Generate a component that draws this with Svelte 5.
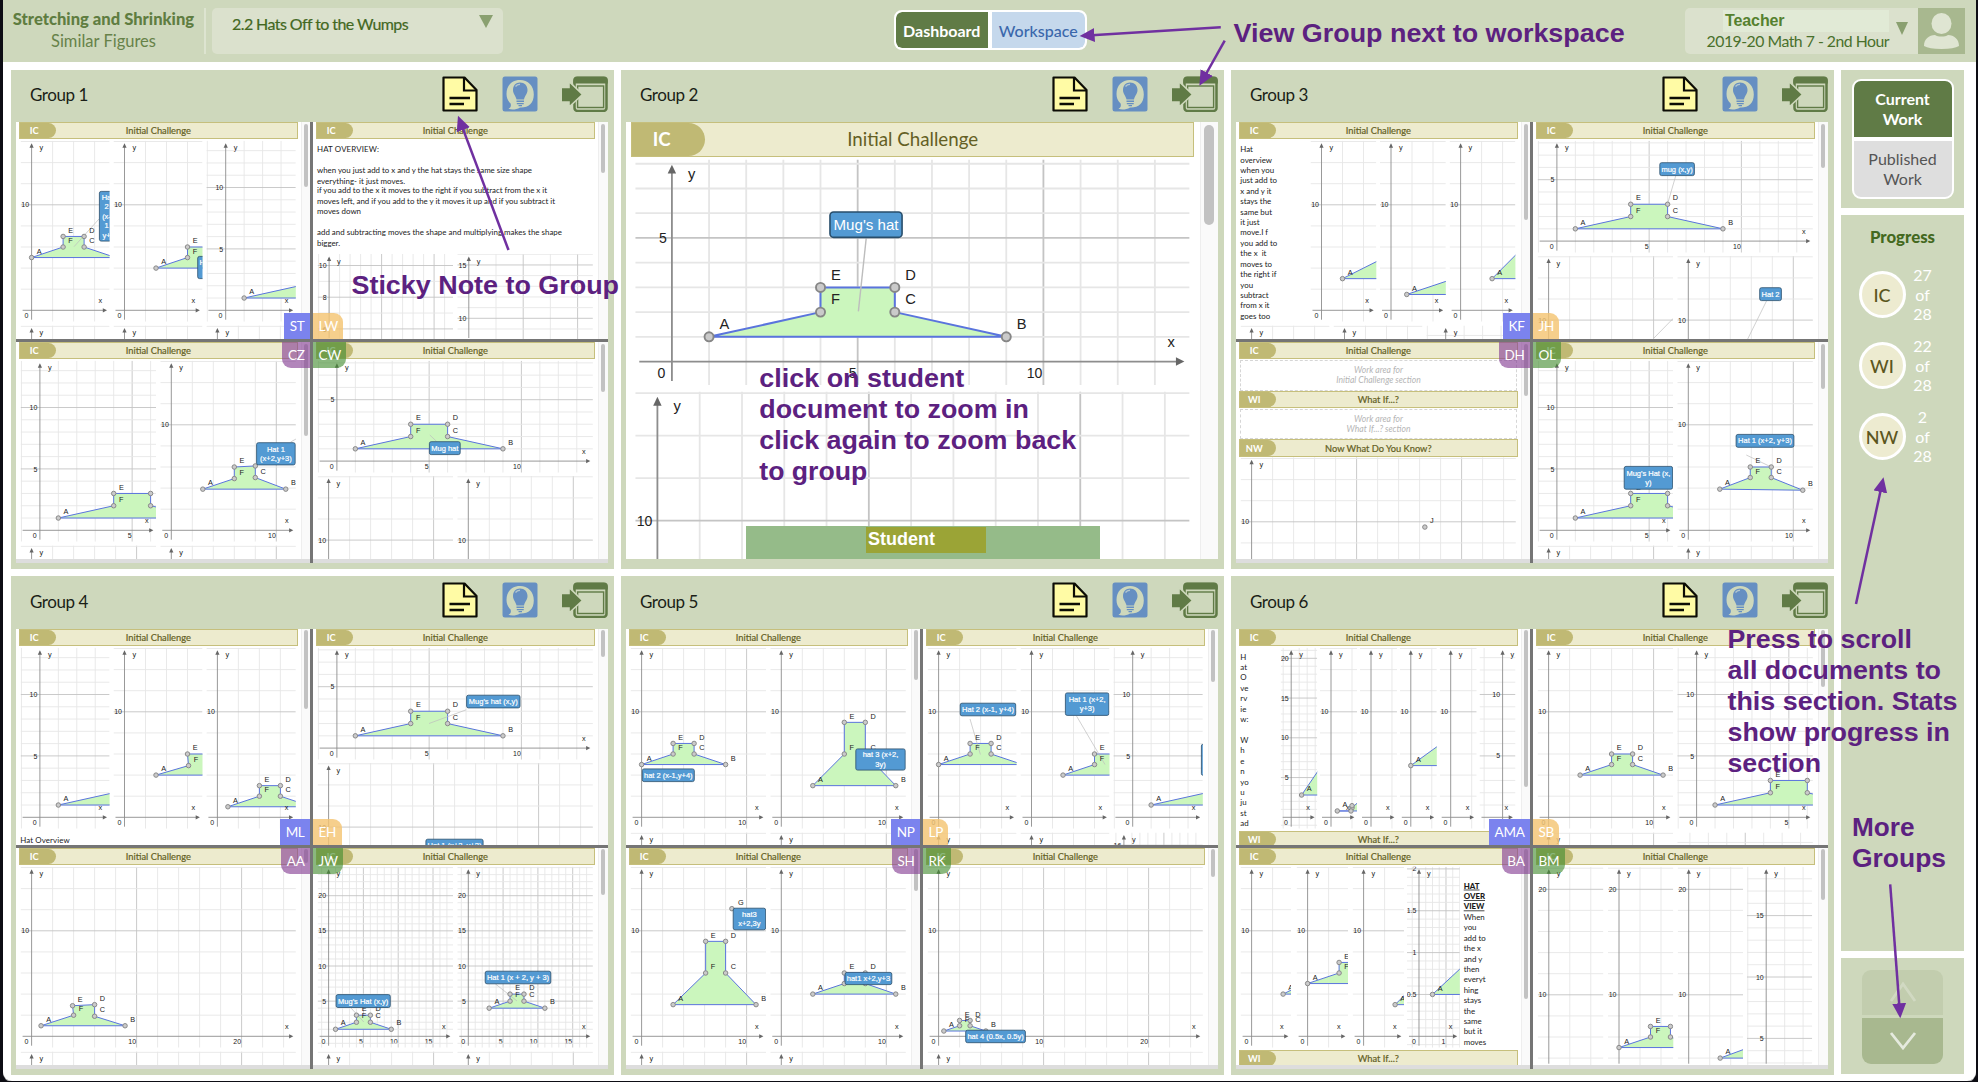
<script>
  // Axis presets: pixels per unit, minor step and major step on each axis.
  const scales = {
    unit: { dx: 19.3, sx: 18.45, sy: 12.28, mx: 1, my: 1, Mx: 5, My: 5 },
    two: { dx: 11, sx: 10.5, sy: 10.55, mx: 2, my: 2, Mx: 10, My: 10 },
    fine: { dx: 11, sx: 6.96, sy: 7.03, mx: 1, my: 1, Mx: 5, My: 5 },
    tall: { dx: 11.5, sx: 10.5, sy: 15.85, mx: 1, my: 1, Mx: 5, My: 2 },
    wide: { dx: 11.5, sx: 27.2, sy: 10.67, mx: 1, my: 1, Mx: 2, My: 5 },
    slim: { dx: 10.5, sx: 8, sy: 7.95, mx: 1, my: 1, Mx: 5, My: 5 },
    tenth: { dx: 12, sx: 27, sy: 83.7, mx: 0.25, my: 0.1, Mx: 1, My: 0.5 }
  };

  const cols = {
    1: [[4.6, 275.3]],
    2: [[4.6, 135.4], [144.3, 135.6]],
    3: [[4.6, 89], [97.5, 89], [190.4, 89.4]]
  };

  function tile(kind, x, w, o = {}) {
    const s = scales[kind];
    const y = o.y ?? 18.7;
    const h = o.h ?? 181;
    const { dx, ...rest } = s;
    return { x, w, y, h, ox: x + dx, oy: y + (h === 112 ? 100.4 : 169.6), ...rest, tags: [], lines: [], names: 'ABCDEF', ...o };
  }
  const col = (n, i, kind, o) => tile(kind, cols[n][i][0], cols[n][i][1], o);
  const row = (y, kinds) => kinds.map((k, i) => col(kinds.length, i, k, { y }));
  const mug = [[1, 1], [9, 1], [6, 2], [6, 3], [4, 3], [4, 2]];
  const move = (dx, dy) => mug.map(([x, y]) => [x + dx, y + dy]);
  const tag = (x, y, w, h, ...text) => ({ x, y, w, h, text });
  const one = (who, thumb, tiles, notes = []) => ({ who, thumb, parts: [{ code: 'IC', title: 'Initial Challenge', y: 0, h: 217, tiles, notes }] });
  const withNext = (doc) => {
    doc.parts[0].h = 202.3;
    doc.parts.push({ code: 'WI', title: 'What If...?', y: 202.3, h: 14.7, tiles: [], notes: [] });
    return doc;
  };
  const note = (x, y, text, o = {}) => ({ x, y, text, ...o });
  const column = (x, y, words, o) => words.map((t, i) => note(x, y + i * 10.42, t, typeof o === 'function' ? o(i) : {}));

  const groups = [
    {
      name: 'Group 1',
      docs: [
        one('ST', 64.5, [
          col(3, 0, 'two', { hat: move(-1, 4), tags: [tag(83, 69, 15, 50.5, 'Ha', '2', '(x-', '1', 'y+')], lines: [[83, 97, 58, 124.7]] }),
          col(3, 1, 'two', { hat: move(2, 3), tags: [tag(181.3, 134, 10, 23, 'H', '')] }),
          col(3, 2, 'unit', { hat: mug }),
          ...row(203.5, ['two', 'two', 'two'])
        ]),
        one('LW', 50, [
          col(2, 0, 'tall', { y: 132, h: 86, oy: 302 }),
          col(2, 1, 'wide', { y: 132, h: 86, oy: 303 })
        ], [
          note(4, 27.3, 'HAT OVERVIEW:', { len: 62 }),
          note(4, 48.3, 'when you just add to x and y the hat stays the same size shape', { len: 215 }),
          note(4, 58.7, 'everything- it just moves.', { len: 88 }),
          note(4, 68.3, 'if you add to the x it moves to the right if you subtract from the x it', { len: 230 }),
          note(4, 78.7, 'moves left, and if you add to the y it moves it up and if you subtract it', { len: 238 }),
          note(4, 89.3, 'moves down', { len: 44 }),
          note(4, 110.3, 'add and subtracting moves the shape and multiplying makes the shape', { len: 245 }),
          note(4, 120.7, 'bigger.', { len: 23 })
        ]),
        one('CZ', 93, [
          col(2, 0, 'unit', { hat: mug }),
          col(2, 1, 'two', { hat: [[3, 3.9], [10.9, 3.9], [8, 5], [8, 6.1], [6, 6], [6, 4.9]], tags: [tag(240.2, 100.3, 39.4, 23, 'Hat 1', '(x+2,y+3)')], lines: [[274.6, 100, 280, 97]] }),
          ...row(203.5, ['two', 'two'])
        ]),
        one('CW', 49, [
          col(1, 0, 'unit', { h: 112, hat: mug, tags: [tag(116, 99.3, 31.6, 13.7, 'Mug hat')], lines: [[123.5, 99.3, 116.8, 93]] }),
          ...row(134, ['two', 'two'])
        ])
      ]
    },
    {
      name: 'Group 2',
      zoomed: true,
      docs: [
        one('', 50.5, [
          col(1, 0, 'unit', { h: 112, ox: 22.8, hat: mug, tags: [tag(100.9, 44.4, 36.6, 13.4, "Mug's hat")], lines: [[119.3, 57.8, 115.4, 94.2]] }),
          col(1, 0, 'two', { y: 134 })
        ])
      ]
    },
    {
      name: 'Group 3',
      docs: [
        one('KF', 97, [
          tile('two', 74.5, 65.8, { hat: [[2, 3], [8, 6], [8, 3]], names: 'A' }),
          tile('two', 144, 65.8, { hat: [[1.5, 1.5], [7.5, 3.5], [7.5, 1.5]], names: 'A' }),
          tile('two', 213.6, 65.8, { hat: [[3, 3], [7, 7], [7, 3]], names: 'A' }),
          ...row(203.5, ['two', 'two', 'unit'])
        ], column(4.3, 27.3, ['Hat', 'overview', 'when you', 'just add to', 'x and y it', 'stays the', 'same but', 'it just', 'move.I f', 'you add to', 'the x  it', 'moves to', 'the right if', 'you', 'subtract', 'from x it', 'goes too'])),
        one('JH', 45.7, [
          col(1, 0, 'unit', { h: 112, hat: mug, tags: [tag(126.4, 40.3, 35.4, 13.7, 'mug (x,y)')], lines: [[142.7, 54, 134.5, 82]] }),
          col(2, 0, 'two', { y: 134, lines: [[140.3, 196.3, 121, 216]] }),
          col(2, 1, 'two', { y: 134, tags: [tag(226.3, 165.3, 22.5, 13.7, 'Hat 2')], lines: [[233.5, 179, 214.7, 217]] })
        ]),
        {
          who: 'DH',
          thumb: 53,
          parts: [
            { code: 'IC', title: 'Initial Challenge', y: 0, h: 48.8, hint: ['Work area for', 'Initial Challenge section'] },
            { code: 'WI', title: 'What If...?', y: 48.8, h: 48.7, hint: ['Work area for', 'What If...? section'] },
            { code: 'NW', title: 'Now What Do You Know?', y: 97.5, h: 119.5, notes: [], tiles: [col(1, 0, 'two', { y: 115.7, h: 110, oy: 285.8, hat: [[16.5, 9.5]], names: 'J' })] }
          ]
        },
        one('OL', 46, [
          col(2, 0, 'unit', { hat: mug, tags: [tag(90.8, 124, 49.2, 23.6, "Mug's Hat (x,", 'y)')] }),
          col(2, 1, 'two', { hat: [[3, 3.9], [10.9, 3.8], [7.9, 5], [7.9, 6], [5.9, 6], [5.9, 5]], tags: [tag(202.7, 92, 58.6, 13.7, 'Hat 1 (x+2, y+3)')], lines: [[213.3, 113, 238.8, 125.3]] }),
          ...row(203.5, ['two', 'two'])
        ])
      ]
    },
    {
      name: 'Group 4',
      docs: [
        one('ML', 80, [
          col(3, 0, 'unit', { hat: mug }),
          col(3, 1, 'two', { hat: [[3, 4], [11, 4], [8, 5], [8, 6], [6, 6], [6.1, 4.9]] }),
          col(3, 2, 'two', { hat: mug })
        ], [note(4.2, 211.5, 'Hat Overview', { len: 49.5 })]),
        one('EH', 27.5, [
          col(1, 0, 'unit', { h: 112, hat: mug, tags: [tag(153.2, 65.8, 54.2, 13.5, "Mug's hat (x,y)")], lines: [[153.2, 80.8, 116, 94.5]] }),
          col(1, 0, 'two', { y: 134, tags: [tag(112.5, 209.8, 58, 13.7, 'Hat 1 (x+2, y+3)')] })
        ]),
        one('AA', 14.5, [
          col(1, 0, 'two', { hat: [[0.9, 1], [8.9, 1], [6, 1.9], [6, 3], [3.9, 2.9], [4, 2]] }),
          col(1, 0, 'two', { y: 203.5 })
        ]),
        one('JW', 46.5, [
          col(2, 0, 'fine', { hat: mug, tags: [tag(22.7, 146.2, 55, 13.7, "Mug's Hat (x,y)")], lines: [[38, 160, 50.8, 174]] }),
          col(2, 1, 'fine', { hat: move(2, 3), tags: [tag(171.8, 122.8, 66.4, 13.4, 'Hat 1 (x + 2, y + 3)')], lines: [[182.5, 136, 204, 153]] }),
          ...row(203.5, ['two', 'two'])
        ])
      ]
    },
    {
      name: 'Group 5',
      docs: [
        one('NP', 51, [
          col(2, 0, 'two', { hat: move(-1, 4), tags: [tag(15.9, 139.5, 52.8, 13.5, 'hat 2 (x-1,y+4)')] }),
          col(2, 1, 'two', { hat: [[3, 3], [10.9, 3], [8, 6], [8, 9], [6, 9], [6, 6]], tags: [tag(229.4, 119.5, 50.2, 22, 'hat 3 (x+2,', '3y)')] }),
          ...row(203.5, ['two', 'two'])
        ]),
        one('LP', 53, [
          col(3, 0, 'two', { hat: move(-1, 4), tags: [tag(36.8, 73.8, 56.4, 13.4, 'Hat 2 (x-1, y+4)')], lines: [[47, 90, 57.4, 125.5]] }),
          col(3, 1, 'two', { hat: move(2, 3), tags: [tag(142, 63.5, 44.3, 23.3, 'Hat 1 (x+2,', 'y+3)')], lines: [[153.4, 86.8, 182, 135.5]] }),
          col(3, 2, 'unit', { hat: mug, tags: [tag(278, 114.8, 24, 32, '')] }),
          col(3, 0, 'two', { y: 203.5 }),
          col(3, 1, 'two', { y: 203.5 }),
          col(3, 2, 'slim', { y: 203.5, oy: 343.4, my: 2, My: 16 })
        ]),
        one('SH', 42.5, [
          col(2, 0, 'two', { hat: [[3, 3], [10.9, 3], [8, 6], [8, 9], [6.1, 9], [6.1, 6]], extra: [8.6, 12.1, 'G'], tags: [tag(106.8, 59.8, 33.2, 22.4, 'hat3', 'x+2,3y')] }),
          col(2, 1, 'two', { hat: [[3, 4], [10.9, 4], [8, 5], [8, 6], [6, 6], [6, 5]], tags: [tag(218.7, 124, 47.5, 13, 'hat1 x+2,y+3')] }),
          ...row(203.5, ['two', 'two'])
        ]),
        one('RK', 29, [
          col(1, 0, 'two', { hat: [[0.5, 0.5], [4.5, 0.5], [3, 1], [3, 1.5], [2, 1.5], [2, 1]], tags: [tag(42.3, 181.8, 60.5, 13.3, 'hat 4 (0.5x, 0.5y)')] }),
          col(1, 0, 'two', { y: 203.5 })
        ])
      ]
    },
    {
      name: 'Group 6',
      docs: [
        withNext(one('AMA', 158, [
          tile('slim', 44.7, 36.5, { hat: [[1.3, 2.8], [5.3, 8.7], [5.3, 2.8]], names: 'A' }),
          tile('two', 84, 37, { hat: [[0.6, 0.6], [3.2, 0.6], [3, 1.8], [2, 0.9], [2, 1.1], [1.9, 0.6]], names: 'A' }),
          tile('two', 124, 37),
          tile('two', 163.8, 37, { hat: [[0, 4.9], [5, 8.5], [5, 4.9]], names: 'A' }),
          tile('two', 203.7, 37),
          tile('unit', 243.5, 36, { ox: 266.6 })
        ], column(4.3, 27.8, ['H', 'at', 'O', 've', 'rv', 'ie', 'w:', '', 'W', 'h', 'e', 'n', 'yo', 'u', 'ju', 'st', 'ad']))),
        one('SB', 58, [
          col(2, 0, 'two', { hat: [[3, 4], [10.9, 4], [8, 5], [8, 6], [6, 6], [6, 5]] }),
          col(2, 1, 'unit', { hat: mug }),
          col(2, 0, 'two', { y: 203.5 }),
          col(2, 1, 'unit', { y: 203.5, ox: 120 })
        ]),
        withNext(one('BA', 151, [
          tile('two', 4.6, 50.4, { hat: [[3, 4], [7, 6], [7, 4]], names: 'A' }),
          tile('two', 60.6, 51.4, { hat: [[0, 5], [8, 5], [5, 6], [5, 7], [3, 7], [3, 6]] }),
          tile('two', 116.6, 51.4, { hat: [[3, 3], [7, 7], [7, 3]], names: 'A' }),
          tile('tenth', 171, 52.8, { hat: [[0.5, 0.5], [2.5, 1.1], [2.5, 0.5]], names: 'A' })
        ], column(227.7, 37.8, ['HAT', 'OVER', 'VIEW', 'When', 'you', 'add to', 'the x', 'and y', 'then', 'everyt', 'hing', 'stays', 'the', 'same', 'but it', 'moves'], (i) => ({ strong: i < 3 })))),
        one('BM', 51.5, [
          tile('two', 4.8, 65.6, { h: 199, oy: 252.3 }),
          tile('two', 75, 65.3, { h: 199, oy: 252.3, hat: [[0, 5], [8, 5], [4.9, 6], [4.9, 7], [3, 7], [3, 6]] }),
          tile('two', 144.7, 65.3, { h: 199, oy: 252.3, hat: [[3, 4], [9, 6.2], [9, 4]], names: 'A' }),
          tile('unit', 213.9, 65.3, { h: 199, oy: 251.8 })
        ])
      ]
    }
  ];

  // Grid line positions for one axis: index k counts minor steps from the origin.
  function ticks(origin, size, minor, major, from, to, dir) {
    const out = [];
    const stepPx = size * minor;
    const per = Math.round(major / minor);
    for (let k = -10; k < 60; k++) {
      const p = origin + dir * k * stepPx;
      if (k !== 0 && p > from && p < to) out.push({ p, big: k % per === 0, v: +(k * minor).toFixed(2) });
    }
    return out;
  }
  const px = (t, x) => t.ox + x * t.sx;
  const py = (t, y) => t.oy - y * t.sy;
  const near = (t, p) => px(t, p[0]) < t.x + t.w + 1;
  const based = (t) => t.oy < t.y + t.h;

  const progress = [
    { code: 'IC', done: 27 },
    { code: 'WI', done: 22 },
    { code: 'NW', done: 2 }
  ];

  const remarks = [
    { x: 1233.6, y: 42.3, w: 391, t: 'View Group next to workspace' },
    { x: 351.5, y: 294.3, w: 267.5, t: 'Sticky Note to Group' },
    { x: 759.3, y: 386.7, w: 205, t: 'click on student' },
    { x: 759.3, y: 417.7, w: 269.5, t: 'document to zoom in' },
    { x: 759.3, y: 448.7, w: 317, t: 'click again to zoom back' },
    { x: 759.3, y: 480, w: 108, t: 'to group' },
    { x: 1727.5, y: 648, w: 184.5, t: 'Press to scroll' },
    { x: 1727.5, y: 679, w: 213.5, t: 'all documents to' },
    { x: 1727.5, y: 709.6, w: 230, t: 'this section. Stats' },
    { x: 1727.5, y: 740.8, w: 222.5, t: 'show progress in' },
    { x: 1727.5, y: 772, w: 93.5, t: 'section' },
    { x: 1852, y: 835.8, w: 62.5, t: 'More' },
    { x: 1852, y: 866.7, w: 94, t: 'Groups' }
  ];
  const arrows = [
    [508.5, 250, 458, 115.7],
    [1220.8, 27.3, 1079.6, 36],
    [1224.7, 40.7, 1199.4, 85.7],
    [1856, 604, 1883.5, 477.3],
    [1890.2, 884.3, 1900.3, 1018.3]
  ];
</script>

{#snippet plot(t)}
  <svg x={t.x} y={t.y} width={t.w} height={t.h} viewBox="{t.x} {t.y} {t.w} {t.h}">
    {#each ticks(t.ox, t.sx, t.mx, t.Mx, t.x, t.x + t.w, 1) as g}
      <line class="grid" class:big={g.big} x1={g.p} x2={g.p} y1={t.y} y2={t.y + t.h} />
      {#if g.big && g.v > 0 && based(t)}<text class="num" x={g.p - 0.5} y={t.oy + 8} text-anchor="end">{g.v}</text>{/if}
    {/each}
    {#each ticks(t.oy, t.sy, t.my, t.My, t.y, t.y + t.h, -1) as g}
      <line class="grid" class:big={g.big} y1={g.p} y2={g.p} x1={t.x} x2={t.x + t.w} />
      {#if g.big && g.v > 0}<text class="num" x={t.ox - 2.5} y={g.p + 2.6} text-anchor="end">{g.v}</text>{/if}
    {/each}
    <line class="axis" x1={t.ox} x2={t.ox} y1={t.y + 4} y2={t.y + t.h - 2} />
    <polygon class="tip" points="{t.ox},{t.y + 2.6} {t.ox - 2.1},{t.y + 7} {t.ox + 2.1},{t.y + 7}" />
    <text class="pt" x={t.ox + 8} y={t.y + 9.5}>y</text>
    {#if based(t)}
      <line class="axis" x1={t.x + 2} x2={t.x + t.w - 5} y1={t.oy} y2={t.oy} />
      <polygon class="tip" points="{t.x + t.w - 2.6},{t.oy} {t.x + t.w - 6.8},{t.oy - 2.1} {t.x + t.w - 6.8},{t.oy + 2.1}" />
      <text class="num" x={t.ox - 3.2} y={t.oy + 8} text-anchor="end">0</text>
    {/if}
    {#if t.hat}
      <polygon class="hat" points={t.hat.map(([x, y]) => `${px(t, x)},${py(t, y)}`).join(' ')} />
    {/if}
    {#each t.lines as l}<line class="leader" x1={l[0]} y1={l[1]} x2={l[2]} y2={l[3]} />{/each}
    {#each t.hat ?? [] as p, i}
      {#if near(t, p)}
        <circle class="dot" cx={px(t, p[0])} cy={py(t, p[1])} r="2.25" />
        {#if t.names[i] && px(t, p[0]) + 6 < t.x + t.w}<text class="pt" x={px(t, p[0]) + 5.2} y={py(t, p[1]) - 3.8}>{t.names[i]}</text>{/if}
      {/if}
    {/each}
    {#if t.extra}
      <circle class="dot" cx={px(t, t.extra[0])} cy={py(t, t.extra[1])} r="2.25" />
      <text class="pt" x={px(t, t.extra[0]) + 6} y={py(t, t.extra[1]) - 3.8}>{t.extra[2]}</text>
    {/if}
    {#if based(t)}<text class="pt" x={t.x + t.w - 11} y={t.oy - 7.2}>x</text>{/if}
    {#each t.tags as c}
      <rect class="tag" x={c.x + 0.4} y={c.y + 0.4} width={c.w - 0.8} height={c.h - 0.8} rx="1.8" />
      {#each c.text as line, i}
        <text class="tagtext" x={c.x + c.w / 2} y={c.y + c.h / 2 + 2.6 + (i - (c.text.length - 1) / 2) * 9.4} text-anchor="middle">{line}</text>
      {/each}
    {/each}
  </svg>
{/snippet}

{#snippet paper(doc)}
  <article class="doc">
    <div class="pages">
      {#each doc.parts as p}
        <section class="part">
          <header class="band"><b>{p.code}</b><span>{p.title}</span></header>
          {#if p.hint}
            <p class="hint">{p.hint[0]}<br />{p.hint[1]}</p>
          {:else if p.h > 20}
            <svg class="canvas" viewBox="0 {p.y + 18} 285 {p.h - 18}">
              {#each p.tiles as t}{@render plot(t)}{/each}
              {#each p.notes as n}
                {#if n.len}
                  <text class="note" x={n.x} y={n.y + 2.8} textLength={n.len}>{n.text}</text>
                {:else}
                  <text class="note" class:strong={n.strong} x={n.x} y={n.y + 2.8}>{n.text}</text>
                {/if}
              {/each}
            </svg>
          {/if}
        </section>
      {/each}
    </div>
    <div class="track"><i style="height: calc({doc.thumb - 1}px * var(--k))"></i></div>
    {#if doc.who}<span class="who">{doc.who}</span>{/if}
  </article>
{/snippet}

<div class="frame">
  <header class="top">
    <div class="unit"><strong>Stretching and Shrinking</strong><span>Similar Figures</span></div>
    <div class="picker"><span>2.2 Hats Off to the Wumps</span><i class="caret"></i></div>
    <nav class="switch"><button class="on">Dashboard</button><button>Workspace</button></nav>
    <div class="teacher">
      <div class="names"><b>Teacher</b><span>2019-20 Math 7 - 2nd Hour</span></div>
      <i class="caret"></i>
    </div>
    <svg class="avatar" viewBox="0 0 47 46">
      <rect width="47" height="46" fill="#a8b88f" />
      <ellipse cx="23.5" cy="15.5" rx="10" ry="10.5" fill="#dfe5d2" />
      <path d="M6 38c0-7 5-11 11-11 3 2 10 2 13 0 6 0 11 4 11 11q-5 3-17.500 3t-17.500-3z" fill="#dfe5d2" />
    </svg>
  </header>

  <main>
    <div class="groups">
      {#each groups as g}
        <section class="group">
          <header class="bar">
            <h2>{g.name}</h2>
            <svg width="36" height="36" viewBox="0 0 36 36">
              <path d="M1.500 1.500H22.500L34.500 14V34.500H1.500z" fill="#fffba5" stroke="#0c0c05" stroke-width="2.200" stroke-linejoin="round" />
              <path d="M22 1.500V14.500H34.500" fill="none" stroke="#0c0c05" stroke-width="2.200" />
              <path d="M7.500 22H28M7.500 28H22" stroke="#0c0c05" stroke-width="2.300" />
            </svg>
            <svg width="36" height="36" viewBox="0 0 36 36">
              <rect x=".5" y=".5" width="35" height="35" rx="2.500" fill="#668fc2" />
              <path d="M18 4C26 4 31.800 9.500 31.800 18.500S26 32 18 31.500C14 34 9.500 34 6.500 32.800C9 31.500 9.200 29.500 8.600 27.500C5.500 24.500 4.500 21.500 4.500 18C4.500 9.500 10 4 18 4z" fill="#ced8bc" />
              <path d="M18 6.500C22.500 6.500 25.500 9.500 25.500 14C25.500 18 22.800 19.500 22 23.500H14.500C13.700 19.500 11 18 11 14C11 9.500 13.800 6.500 18 6.500z" fill="#668fc2" />
              <path d="M13.500 10.500Q15.500 8.200 18 8.500" stroke="#b4c8cf" stroke-width="1.300" fill="none" />
              <path d="M14.500 25.300H22M14.800 27.600H21.700M16.500 29.600H20" stroke="#668fc2" stroke-width="1.400" />
            </svg>
            <svg width="46" height="36" viewBox="0 0 46 36">
              <rect x="12.500" y="2" width="32" height="33" rx="3" fill="#ced8bc" stroke="#607b46" stroke-width="2.500" />
              <path d="M11.300 7.500V4Q11.300 .5 14.800 .5H42.200Q45.800 .5 45.800 4V7.500z" fill="#607b46" />
              <rect x="15.600" y="10" width="26" height="21.500" fill="none" stroke="#607b46" stroke-width="1.400" />
              <path d="M-1 11.500H7V5.500L20.500 18.500L7 31V26H-1z" fill="#607b46" stroke="#ced8bc" stroke-width="1.600" />
            </svg>
          </header>
          <div class="docs" class:zoomed={g.zoomed}>
            {#each g.docs as doc}{@render paper(doc)}{/each}
            {#if g.zoomed}<div class="student"><b>Student</b></div>{/if}
          </div>
        </section>
      {/each}
    </div>

    <aside>
      <div class="panel modes">
        <div class="stack"><button class="on">Current<br />Work</button><button>Published<br />Work</button></div>
      </div>
      <div class="panel stats">
        <h3>Progress</h3>
        {#each progress as p}
          <div class="stat"><span class="disc">{p.code}</span><span class="count">{p.done}<br />of<br />28</span></div>
        {/each}
      </div>
      <div class="panel pager">
        <button class="up" aria-label="Previous groups"><svg viewBox="0 0 30 26"><path d="M3 22L15 5L27 22" /></svg></button>
        <button class="down" aria-label="More groups"><svg viewBox="0 0 30 26"><path d="M3 5L15 20L27 5" /></svg></button>
      </div>
    </aside>
  </main>
</div>

<svg class="remarks" width="1978" height="1082" viewBox="0 0 1978 1082">
  <defs>
    <marker id="head" markerUnits="userSpaceOnUse" markerWidth="16" markerHeight="16" refX="3" refY="7" orient="auto">
      <path d="M0 0L15 7L0 14z" fill="#7030a0" />
    </marker>
  </defs>
  {#each arrows as a}
    {@const d = Math.hypot(a[2] - a[0], a[3] - a[1])}
    <line x1={a[0]} y1={a[1]} x2={a[2] - ((a[2] - a[0]) / d) * 12} y2={a[3] - ((a[3] - a[1]) / d) * 12} stroke="#7030a0" stroke-width="2.500" marker-end="url(#head)" />
  {/each}
  {#each remarks as r}
    <text x={r.x} y={r.y} textLength={r.w} lengthAdjust="spacingAndGlyphs">{r.t}</text>
  {/each}
</svg>

<style>
  :global(body) { background: #0d0d14; }
  * { box-sizing: border-box; }
  button { border: 0; padding: 0; margin: 0; font: inherit; color: inherit; background: none; }
  h2, h3, p { margin: 0; font-weight: 400; }
  .frame {
    width: 1973px; height: 1081px; margin-left: 3px; background: #fff; overflow: hidden;
    border-radius: 0 0 9px 9px; font-family: Lato, "Open Sans", sans-serif;
    box-shadow: 0 1px 0 #a9a9a9;
  }
  .top { height: 62px; background: #ced8bc; display: flex; align-items: flex-start; padding: 8px 11px 0 0; }
  .unit { width: 203px; height: 46px; border-right: 2px solid #dde4d0; display: flex; flex-direction: column; align-items: center; text-align: center; color: #678249; font-size: 16.5px; line-height: 21.500px; padding-top: 1px; }
  .unit strong { font-size: 16.6px; font-weight: 900; color: #5f7d41; white-space: nowrap; }
  .picker { margin-left: 6px; width: 291px; height: 46px; border-radius: 5px; background: #dbe1cd; color: #43681f; font-size: 16px; letter-spacing: -.58px; display: flex; justify-content: space-between; padding: 6px 10px 0 20px; }
  .picker span { -webkit-text-stroke: .2px; }
  .caret { width: 0; height: 0; border: 7px solid transparent; border-top: 13px solid #8aa070; border-bottom: 0; }
  .picker .caret { margin-top: 1px; }
  .switch { margin: 2px 0 0 390.500px; width: 193px; height: 40px; border: 2px solid #fff; border-radius: 8px; background: #fff; display: flex; gap: 4px; overflow: hidden; font-size: 16px; font-weight: 500; letter-spacing: -.2px; color: #3a67ab; }
  .switch button { flex: 1; background: #c5d8ec; border-radius: 0 6px 6px 0; }
  .switch .on { background: #607b46; color: #fff; font-weight: 700; border-radius: 6px 0 0 6px; }
  .teacher { margin-left: auto; width: 233px; height: 46px; background: #dbe1cd; border-radius: 5px 0 0 5px; display: flex; padding: 2px 10px 0 20px; gap: 7px; color: #49702c; }
  .names { display: flex; flex-direction: column; align-items: flex-end; width: 184px; font-size: 15.800px; letter-spacing: -.5px; white-space: nowrap; line-height: 18.500px; }
  .names b { width: 166px; height: 22px; background: #e1ead6; font: bold 16px/21px "Liberation Sans", sans-serif; letter-spacing: -.1px; padding-left: 2px; color: #55812f; }
  .teacher .caret { margin-top: 12px; border-width: 13px 6.500px 0; }
  .avatar { width: 47px; height: 46px; }

  main { display: flex; padding: 7.500px 0 0 8px; gap: 7px; }
  .groups { display: grid; grid-template-columns: repeat(3, 603px); grid-auto-rows: 499.3px; gap: 7.300px 7px; }
  .group { background: #ced8bc; display: flex; flex-direction: column; padding: 0 6px 0 5px; }
  .bar { height: 52.500px; display: flex; align-items: center; gap: 24px; padding: 0 .5px 5px 14px; flex: none; }
  .bar h2 { margin-right: auto; font-size: 17px; letter-spacing: -.45px; color: #1b1f17; padding-top: 3px; }
  .bar svg { flex: none; margin-top: 1px; }
  .docs { --k: 1; height: 441px; display: grid; grid-template-columns: 294px 295px; grid-template-rows: 217px 221px; gap: 3px; background: #757575; overflow: hidden; position: relative; }
  .group:nth-child(n + 4) .docs { grid-template-rows: 216px 221px; height: 440px; }
  .docs.zoomed { --k: 2.0136; height: 437px; display: block; }
  .doc { position: relative; background: #fff; display: flex; min-width: 0; overflow: hidden; height: 100%; }
  .doc:nth-child(n + 3) { border-bottom: 4px solid #ddd; }
  .pages { width: calc(285px * var(--k)); flex: none; }
  .band { margin: 0 calc(3px * var(--k)) calc(.7px * var(--k)) calc(2.7px * var(--k)); height: calc(17.3px * var(--k)); border: calc(.9px * var(--k)) solid #c6bf7c; background: #edebce; display: flex; align-items: center; font-size: calc(9.3px * var(--k)); color: #645f24; position: relative; }
  .band b { width: calc(36px * var(--k)); align-self: stretch; border-radius: 0 calc(9px * var(--k)) calc(9px * var(--k)) 0; background: #c0b974; color: #fff; display: grid; place-items: center; padding-right: calc(7px * var(--k)); }
  .band span { flex: 1; text-align: center; padding-right: calc(36px * var(--k)); white-space: nowrap; }
  .docs:not(.zoomed) .band span { -webkit-text-stroke: .2px; }
  .hint { height: 30.400px; margin: 1px 4px 0 4px; border: 1.500px dashed #d6d6d6; color: #b5b5b5; font-style: italic; font-size: 8.600px; line-height: 10.400px; display: grid; place-content: center; text-align: center; }
  .canvas { display: block; width: 100%; }
  .track { flex: 1; background: #fafafa; border-left: 1px solid #eee; padding: calc(1.5px * var(--k)) 0 0 calc(1.8px * var(--k)); }
  .track i { display: block; width: calc(4.600px * var(--k)); border-radius: 5px; background: #c2c2c2; }
  .who { position: absolute; height: 26px; padding: 0 5.500px; min-width: 24.500px; font-size: 13.500px; letter-spacing: -.3px; line-height: 27px; text-align: center; color: #fff; }
  .doc:nth-child(1) .who { right: 0; bottom: 0; background: #7b83ee; }
  .doc:nth-child(2) .who { left: 0; bottom: 0; background: rgba(244, 196, 115, .82); border-radius: 0 9px 0 0; }
  .doc:nth-child(3) .who { right: 0; top: 0; background: rgba(134, 64, 148, .64); border-radius: 0 0 0 9px; }
  .doc:nth-child(4) .who { left: 0; top: 0; background: rgba(66, 140, 46, .62); border-radius: 0 0 9px 0; }
  .student { position: absolute; left: 119.500px; bottom: 0; width: 354px; height: 33px; background: #95bb89; padding: 1px 0 0 120.500px; }
  .student b { display: block; width: 120px; height: 26px; background: #9ba436; color: #fff; font: bold 18px/24px "Liberation Sans", sans-serif; padding-left: 2px; }

  .grid { stroke: #e6e6e6; stroke-width: .9; }
  .grid.big { stroke: #c4c4c4; }
  .axis { stroke: #8d8d8d; stroke-width: .9; }
  .tip { fill: #666; }
  .hat { fill: #cbf6bd; stroke: #5a74dd; stroke-width: 1; stroke-linejoin: round; }
  .dot { fill: #cacaca; stroke: #868686; stroke-width: .95; }
  .leader { stroke: #bdbdbd; stroke-width: .7; }
  .num, .pt, .tagtext { font-family: "Liberation Sans", Arial, sans-serif; fill: #222; font-size: 7px; }
  .pt { font-size: 7.300px; }
  .tag { fill: #539ad3; stroke: #294e6b; stroke-width: .8; }
  .tagtext { fill: #fff; font-size: 7.500px; }
  .docs:not(.zoomed) .tagtext { stroke: #fff; stroke-width: .2px; }
  .note { font-family: Lato, sans-serif; font-size: 7.900px; fill: #1a1a1a; white-space: pre; }
  .strong { font-weight: 900; text-decoration: underline; }

  aside { display: flex; flex-direction: column; gap: 7px; width: 123px; }
  .panel { background: #ced8bc; display: flex; flex-direction: column; align-items: center; }
  .modes { height: 138.500px; padding-top: 9.500px; }
  .stack { width: 102px; height: 120px; background: #fff; border: 2px solid #fff; border-radius: 9px; display: flex; flex-direction: column; gap: 4px; font-size: 16px; letter-spacing: -.3px; line-height: 20px; color: #555; }
  .stack button { flex: 1; background: #dedede; border-radius: 0 0 7px 7px; }
  .stack .on { background: #607b46; color: #fff; font-weight: 700; border-radius: 7px 7px 0 0; }
  .stats { height: 735.700px; padding-top: 11px; }
  .stats h3 { font-size: 16.800px; font-weight: 900; color: #44691f; height: 33px; line-height: 22px; }
  .stat { height: 71px; width: 100%; display: flex; align-items: center; padding-left: 17.500px; }
  .disc { width: 47px; height: 47px; border: 3px solid #fff; border-radius: 50%; background: #edebd0; display: grid; place-items: center; font-size: 18px; color: #5b561d; font-weight: 500; }
  .count { width: 34px; text-align: center; color: #fff; font-size: 16px; line-height: 19.700px; }
  .pager { height: 116.500px; padding-top: 12px; gap: 3px; }
  .pager button { width: 81px; height: 45.500px; display: grid; place-items: center; }
  .pager svg { width: 30px; height: 26px; fill: none; stroke: #fff; stroke-opacity: .7; stroke-width: 2.800; }
  .up { background: #c2cdae; border-radius: 9px 9px 0 0; }
  .up svg { stroke-opacity: .25; }
  .down { background: #a8b88f; border-radius: 0 0 9px 9px; }

  .remarks { position: absolute; left: 0; top: 0; pointer-events: none; }
  .remarks text { font: bold 26px "Liberation Sans", Arial, sans-serif; fill: #5c2180; }
</style>
